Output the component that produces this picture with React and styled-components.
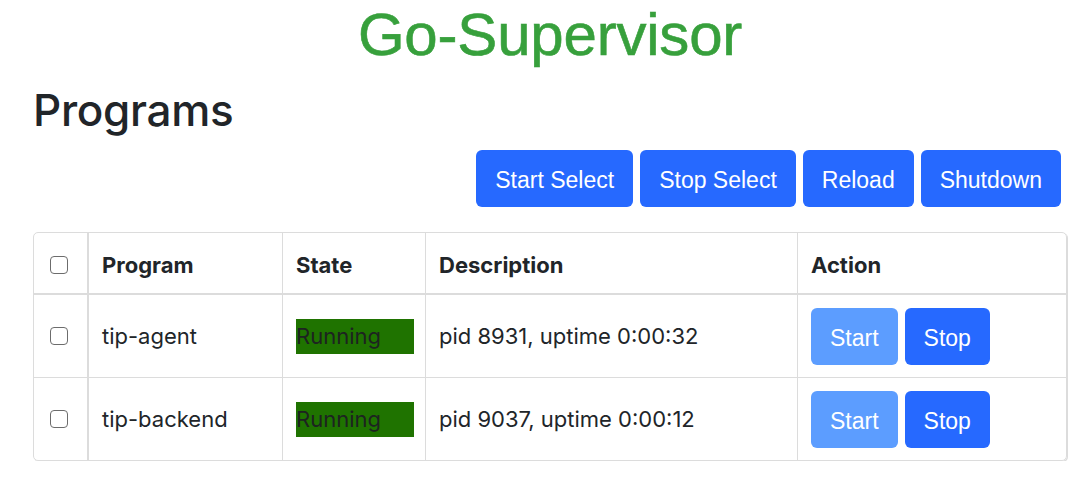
import React from "react";
import styled, { createGlobalStyle } from "styled-components";

const GlobalStyle = createGlobalStyle`
  body {
    margin: 0;
    background: #fff;
    color: #212529;
    font-family: Inter, "Noto Sans", sans-serif;
  }
`;

const Page = styled.div`
  padding: 0 25px 0 33px;
`;

const Title = styled.h1`
  margin: 0;
  padding-top: 1px;
  text-align: center;
  font-family: "Liberation Sans", Arial, sans-serif;
  font-weight: 400;
  font-size: 60px;
  line-height: 67px;
  letter-spacing: -0.2px;
  color: #37a03c;
  -webkit-text-stroke: 0.6px #37a03c;
`;

const Heading = styled.h2`
  margin: 16px 0 0;
  font-size: 44px;
  font-weight: 500;
  line-height: 53px;
  letter-spacing: -0.3px;
`;

const Toolbar = styled.div`
  display: flex;
  justify-content: flex-end;
  gap: 7px;
  margin: 13px 6px 0 0;
`;

const Button = styled.button`
  border: none;
  border-radius: 6px;
  background: ${(props) => (props.light ? "#5c9dff" : "#2669ff")};
  color: #fff;
  font-family: "Liberation Sans", Arial, sans-serif;
  font-size: 23px;
  line-height: 35px;
  padding: 13px 19px 9px;
  cursor: pointer;
`;

const Table = styled.table`
  margin-top: 25px;
  width: 100%;
  table-layout: fixed;
  border-collapse: separate;
  border-spacing: 0;
  border: 1px solid #dcdcdc;
  border-radius: 5px;
  box-shadow: 1px 1px 0 #dcdcdc;
  font-size: 22px;
`;

const Th = styled.th`
  text-align: left;
  font-weight: 700;
  height: 62px;
  padding: 3px 13px 0;
  border-bottom: 2px solid #dcdcdc;
  border-left: ${(props) => (props.first ? "none" : props.thick ? "2px solid #dcdcdc" : "1px solid #dcdcdc")};
  width: ${(props) => (props.w ? `${props.w}px` : "auto")};
  box-sizing: border-box;
`;

const Td = styled.td`
  height: 82px;
  padding: 0 13px;
  border-top: ${(props) => (props.firstRow ? "none" : "1px solid #dcdcdc")};
  border-left: ${(props) => (props.first ? "none" : props.thick ? "2px solid #dcdcdc" : "1px solid #dcdcdc")};
  vertical-align: middle;
`;

const Check = styled.input.attrs({ type: "checkbox" })`
  appearance: none;
  display: block;
  margin: 0 0 0 3px;
  width: 18px;
  height: 18px;
  border: 1.5px solid #6c6c6c;
  border-radius: 4px;
  background: #fff;
`;

const Badge = styled.span`
  display: inline-block;
  width: 118px;
  height: 35px;
  line-height: 35px;
  background: #1f7300;
  color: #1d2320;
`;

const Actions = styled.div`
  display: flex;
  gap: 7px;
`;

const programs = [
  { name: "tip-agent", pid: 8931, uptime: "0:00:32" },
  { name: "tip-backend", pid: 9037, uptime: "0:00:12" },
];

export default function App() {
  return (
    <Page>
      <GlobalStyle />
      <Title>Go-Supervisor</Title>
      <Heading>Programs</Heading>
      <Toolbar>
        <Button>Start Select</Button>
        <Button>Stop Select</Button>
        <Button>Reload</Button>
        <Button>Shutdown</Button>
      </Toolbar>
      <Table>
        <thead>
          <tr>
            <Th first w={53}>
              <Check />
            </Th>
            <Th thick w={195}>Program</Th>
            <Th w={143}>State</Th>
            <Th w={372}>Description</Th>
            <Th>Action</Th>
          </tr>
        </thead>
        <tbody>
          {programs.map((p, i) => (
            <tr key={p.name}>
              <Td first firstRow={i === 0}>
                <Check />
              </Td>
              <Td thick firstRow={i === 0}>{p.name}</Td>
              <Td firstRow={i === 0}>
                <Badge>Running</Badge>
              </Td>
              <Td firstRow={i === 0}>
                pid {p.pid}, uptime {p.uptime}
              </Td>
              <Td firstRow={i === 0}>
                <Actions>
                  <Button light>Start</Button>
                  <Button>Stop</Button>
                </Actions>
              </Td>
            </tr>
          ))}
        </tbody>
      </Table>
    </Page>
  );
}
